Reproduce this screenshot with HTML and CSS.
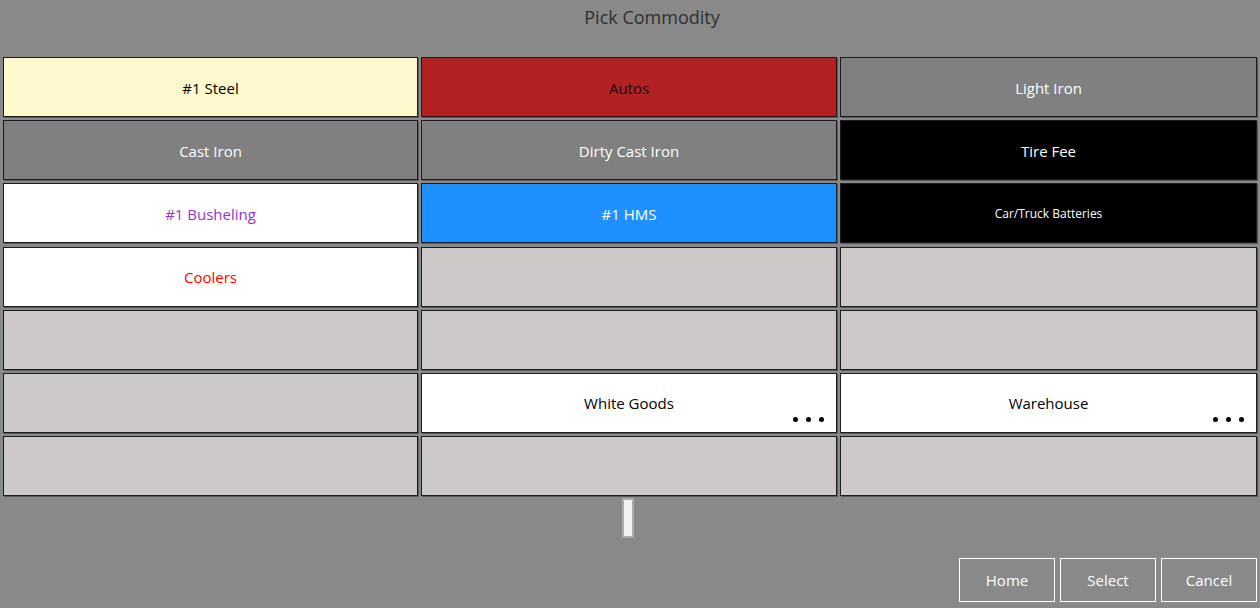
FILE: index.html
```html
<!DOCTYPE html>
<html lang="en">
<head>
    <meta charset="UTF-8">
    <title>Pick Commodity</title>
    <link rel="stylesheet" href="styles.css">
</head>
<body>
    <h1 class="title">Pick Commodity</h1>

    <div class="grid">
        <div class="tile cream">#1 Steel</div>
        <div class="tile red">Autos</div>
        <div class="tile gray">Light Iron</div>

        <div class="tile gray">Cast Iron</div>
        <div class="tile gray">Dirty Cast Iron</div>
        <div class="tile black">Tire Fee</div>

        <div class="tile white orchid">#1 Busheling</div>
        <div class="tile blue">#1 HMS</div>
        <div class="tile black small">Car/Truck Batteries</div>

        <div class="tile white redtext">Coolers</div>
        <div class="tile empty"></div>
        <div class="tile empty"></div>

        <div class="tile empty"></div>
        <div class="tile empty"></div>
        <div class="tile empty"></div>

        <div class="tile empty"></div>
        <div class="tile white">White Goods<span class="more"><i></i><i></i><i></i></span></div>
        <div class="tile white">Warehouse<span class="more"><i></i><i></i><i></i></span></div>

        <div class="tile empty"></div>
        <div class="tile empty"></div>
        <div class="tile empty"></div>
    </div>

    <div class="pager"><div class="thumb"></div></div>

    <div class="actions">
        <button class="btn">Home</button>
        <button class="btn">Select</button>
        <button class="btn">Cancel</button>
    </div>
</body>
</html>
```

FILE: styles.css
```css
body { margin: 0; background: #898989; font-family: "Open Sans", "Noto Sans", sans-serif; width: 1260px; height: 608px; overflow: hidden; }
.title { margin: 0; height: 57px; padding: 5px 0 0 44px; box-sizing: border-box; text-align: center; font-size: 18px; font-weight: normal; color: #303030; }
.grid { display: grid; grid-template-columns: 415px 416px 417px; grid-auto-rows: 60px; column-gap: 3px; row-gap: 3.2px; padding: 0 3px; }
.tile { position: relative; display: flex; align-items: center; justify-content: center; padding-top: 1px; border: 1px solid #1c1c1c; box-shadow: 1px 1px 0 #5a5a5a; font-size: 15px; color: #000; }
.cream { background: #fffacd; }
.red { background: #b22222; color: #1a0505; }
.gray { background: #808080; color: #fff; }
.black { background: #000; color: #fff; }
.white { background: #fff; }
.blue { background: #1e90ff; color: #fff; }
.empty { background: #cdc9c8; }
.orchid { color: #9932cc; }
.redtext { color: #ff0000; }
.small { font-size: 12px; }
.more { position: absolute; right: 12px; bottom: 10px; display: flex; gap: 8px; }
.more i { width: 5px; height: 5px; border-radius: 50%; background: #000; }
.pager { display: flex; justify-content: center; padding-top: 2px; }
.thumb { width: 8px; height: 36px; background: #f1f1f1; border: 2px solid #acacac; margin-left: -4px; }
.actions { display: flex; justify-content: flex-end; gap: 5px; padding: 20px 3px 0 0; }
.btn { width: 96px; height: 44px; background: transparent; border: 1px solid #fff; color: #fff; font-family: inherit; font-size: 15px; }
```
